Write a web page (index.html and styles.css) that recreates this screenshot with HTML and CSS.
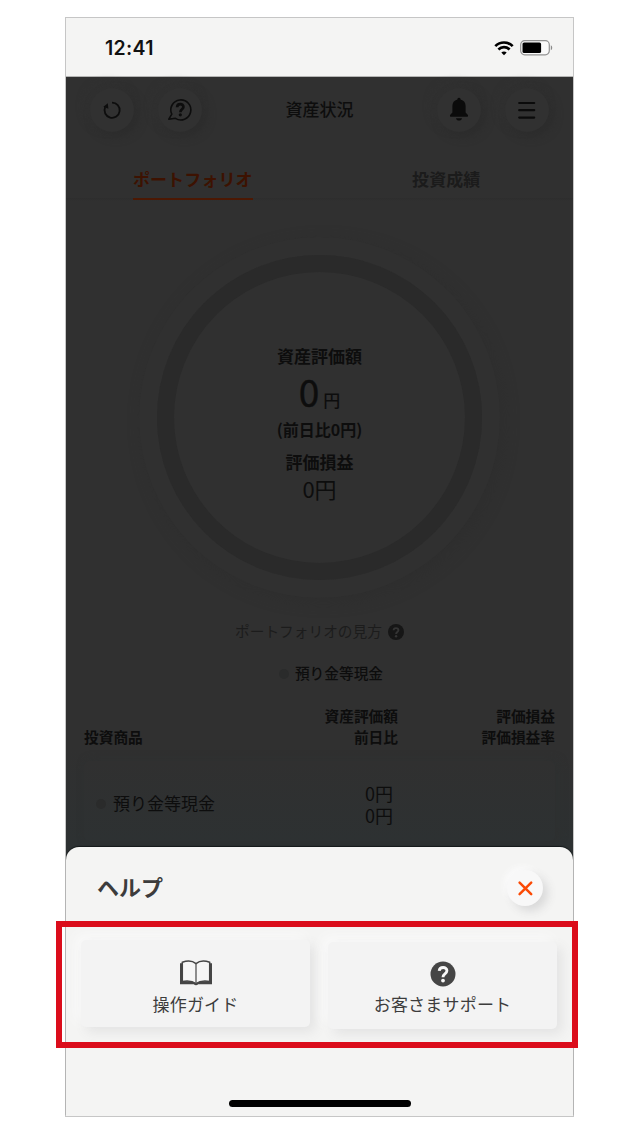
FILE: index.html
```html
<!DOCTYPE html>
<html lang="ja">
<head>
<meta charset="utf-8">
<title>資産状況</title>
<link rel="stylesheet" href="styles.css">
</head>
<body>
<div class="phone">
  <div class="status">
    <span class="time">12:41</span>
    <svg class="wifi" width="20" height="16" viewBox="0 0 20 16"><g fill="none" stroke="#000" stroke-width="2.7"><path d="M1.3 6.1C6.2 1.3 13.8 1.3 18.7 6.1"/><path d="M4.4 9.4c3.2-3 8-3 11.2 0"/></g><path d="M10 15.2l-2.7-2.7c1.5-1.3 3.9-1.3 5.4 0z"/></svg>
    <svg class="battery" width="33" height="16" viewBox="0 0 33 16"><rect x=".7" y=".7" width="28.6" height="14.1" rx="4" fill="#fafafa" stroke="#929292" stroke-width="1.2"/><rect x="2.5" y="2.5" width="18.6" height="10.6" rx="1.6"/><path d="M30.8 5.3c1.9.8 1.9 4.2 0 5z" fill="#8a8a8a"/></svg>
  </div>
  <main class="screen">
    <header class="bar">
      <button class="round"><svg width="44" height="44" viewBox="0 0 44 44"><path d="M22 14.6a7.6 7.6 0 1 1-6.9 4.6" fill="none" stroke="#0d0d0d" stroke-width="1.8"/><path d="M13.4 18.8l4.400-3.600.6 5.600z" fill="#0d0d0d"/></svg></button>
      <button class="round"><svg width="44" height="44" viewBox="0 0 44 44"><path d="M13.800 26.200A10 10 0 1 1 17.400 30.300L10.800 31.200z" fill="none" stroke="#0d0d0d" stroke-width="1.600" stroke-linejoin="round"/><path d="M19.100 19.200c.2-4 6.400-3.900 6.300-.2-.1 2.500-3 2.200-3 5.200" fill="none" stroke="#0d0d0d" stroke-width="2.700"/><circle cx="22.300" cy="26.800" r="1.600" fill="#0d0d0d"/></svg></button>
      <h1 class="title">資産状況</h1>
      <button class="round"><svg width="44" height="44" viewBox="0 0 44 44"><path d="M22 9.800c1 0 1.600.7 1.600 1.700 3.300.8 5 3.300 5 6.600v6.300l2.100 2.300c.8 1 .2 2.100-.9 2.100H14.200c-1.100 0-1.700-1.100-.9-2.100l2.100-2.300v-6.300c0-3.300 1.700-5.800 5-6.600 0-1 .6-1.700 1.600-1.700zM19 30.200h6c-.3 3.200-5.700 3.200-6 0z" fill="#0b0b0b"/></svg></button>
      <button class="round"><svg width="44" height="44" viewBox="0 0 44 44"><path d="M14.200 15h15M14.200 22.200h15M14.200 29.600h15" stroke="#0b0b0b" stroke-width="2.200" stroke-linecap="round"/></svg></button>
    </header>
    <nav class="tabs">
      <div class="tab"><span class="tab-label active">ポートフォリオ</span></div>
      <div class="tab"><span class="tab-label">投資成績</span></div>
    </nav>
    <section class="donut">
      <div class="l17">資産評価額</div>
      <div class="amount"><span class="num">0</span><span class="yen">円</span></div>
      <div class="diff">(前日比0円)</div>
      <div class="l17 gain">評価損益</div>
      <div class="gain-num">0円</div>
    </section>
    <div class="howto"><span>ポートフォリオの見方</span><svg width="16" height="16" viewBox="0 0 16 16"><circle cx="8" cy="8" r="8" fill="#161616"/><path d="M5.600 6.300c.1-3 4.800-2.900 4.800-.1 0 1.800-2.300 1.800-2.300 3.800" fill="none" stroke="#343434" stroke-width="1.900"/><circle cx="8.100" cy="12.200" r="1.200" fill="#343434"/></svg></div>
    <div class="legend"><i class="dot"></i><span>預り金等現金</span></div>
    <div class="thead"><span>投資商品</span><span class="col">資産評価額<br>前日比</span><span class="col">評価損益<br>評価損益率</span></div>
    <div class="row"><i class="dot"></i><span class="name">預り金等現金</span><div class="vals"><div>0円</div><div>0円</div></div></div>
  </main>
  <section class="sheet">
    <div class="sheet-head">
      <h2>ヘルプ</h2>
      <button class="close"><svg width="36" height="36" viewBox="0 0 36 36"><path d="M12.600 12.600l11.600 11.600M24.200 12.600L12.600 24.200" stroke="#fb4a05" stroke-width="2.500" stroke-linecap="round"/></svg></button>
    </div>
    <div class="choices">
      <button class="card"><svg width="34" height="26" viewBox="0 0 34 26"><path d="M1 3.200h3v18.600c5-.9 9-.6 12.500 1.400h1c3.500-2 7.500-2.300 12.500-1.400V3.200h3v21H19.200c-1.200 1.300-3.200 1.300-4.400 0H1z" fill="#454545"/><path d="M3.300 2.200C8.500.3 13.500.6 17 3.600c3.500-3 8.500-3.300 13.700-1.400v19.300c-5-.8-10-.6-13.700 2-3.700-2.600-8.700-2.800-13.700-2z" fill="#f6f6f6" stroke="#454545" stroke-width="1.500"/><path d="M17 3.500v20" stroke="#555" stroke-width="1.300"/></svg><span>操作ガイド</span></button>
      <button class="card second"><svg width="26" height="26" viewBox="0 0 26 26"><circle cx="13" cy="13" r="12.500" fill="#454545"/><path d="M9.200 9.900c.3-4.600 7.800-4.500 7.700-.1-.1 3.200-3.900 3.100-3.900 6.400" fill="none" stroke="#f8f8f8" stroke-width="2.900"/><circle cx="13" cy="19.600" r="1.900" fill="#f8f8f8"/></svg><span>お客さまサポート</span></button>
    </div>
    <div class="home"></div>
  </section>
  <div class="highlight"></div>
</div>
</body>
</html>
```
FILE: styles.css
```css
* { box-sizing: border-box; }
body { margin: 0; padding: 17px 0 0 65px; background: #fff; font-family: "Noto Sans CJK JP", sans-serif; }
button { border: 0; padding: 0; margin: 0; font: inherit; color: inherit; background: none; }
h1, h2 { margin: 0; }
svg { display: block; flex: none; }
i { flex: none; }
.phone { position: relative; width: 509px; height: 1100px; border: 1px solid #c6c6c6; background: linear-gradient(#303030 0 730px, #2d3132 828px); display: flex; flex-direction: column; }
.status { height: 59px; flex: none; background: #f4f4f3; border-bottom: 1px solid #b5b5b4; display: flex; align-items: center; padding: 2px 20px 0 39px; }
.time { flex: 1; font: 600 19.5px/24px Inter, sans-serif; letter-spacing: .3px; color: #111; }
.wifi { margin-right: 6px; }
.screen { height: 770px; flex: none; color: #0d0d0d; }
.bar { height: 66px; display: flex; align-items: center; gap: 24px; padding: 0 24px; }
.round { width: 44px; height: 44px; border-radius: 50%; background: #313131; box-shadow: 4px 4px 10px #2c2c2c, -4px -4px 10px #313131; }
.title { flex: 1; text-align: center; font-size: 17px; font-weight: 500; line-height: 24px; padding-bottom: 2px; }
.tabs { height: 58px; display: flex; background: linear-gradient(transparent 55px, #2d2d2d 55px, #303030); }
.tab { flex: 1; display: flex; justify-content: center; }
.tab-label { height: 57px; padding-top: 24px; font-size: 17px; line-height: 24px; font-weight: 700; letter-spacing: .1px; color: #1b1b1b; white-space: nowrap; }
.active { color: #3d1201; border-bottom: 2px solid #4c1803; }
.donut { width: 325px; height: 325px; margin: 54px 0 0 91px; border: 17.5px solid #2a2a2a; border-radius: 50%; box-shadow: 0 0 0 18px #303030, 4px 4px 14px 18px #2e2e2e; display: flex; flex-direction: column; align-items: center; padding-top: 72px; }
.l17 { font-size: 17px; font-weight: 700; line-height: 24px; }
.amount { height: 46px; display: flex; align-items: baseline; line-height: 46px; gap: 4px; }
.num { font-size: 37px; font-weight: 400; -webkit-text-stroke: .4px #0d0d0d; }
.yen { font-size: 17px; font-weight: 500; }
.diff { font-size: 16px; font-weight: 700; line-height: 24px; margin-top: 3px; }
.gain { margin-top: 9px; }
.gain-num { font-size: 22px; line-height: 30px; margin-top: -1px; }
.howto { display: flex; justify-content: center; align-items: center; gap: 6px; margin-top: 41px; height: 22px; font-size: 14.7px; color: #1c1c1c; }
.howto span { padding-bottom: 3px; }
.legend { display: flex; justify-content: center; align-items: center; gap: 6px; height: 22px; margin-top: 20px; padding-left: 23px; font-size: 14.7px; font-weight: 500; }
.legend span { padding-bottom: 3px; }
.dot { width: 10px; height: 10px; border-radius: 50%; background: #2a2b2b; }
.thead { display: grid; grid-template-columns: 1fr 1fr 1fr; align-items: end; padding: 0 18px; margin-top: 20px; font-size: 14.7px; font-weight: 700; line-height: 21px; }
.col { text-align: right; }
.row { display: flex; align-items: center; height: 80px; margin: 14px 18px 0; padding: 6px 162px 0 12px; border-radius: 6px; background: linear-gradient(#303030, #2d3132); box-shadow: 3px 0 10px #2e3030; font-size: 17px; }
.name { flex: 1; margin-left: 7px; padding-bottom: 3px; }
.vals { font-size: 18px; line-height: 22px; text-align: right; }
.sheet { flex: 1; background: #f4f4f3; border-radius: 13px 13px 0 0; box-shadow: 0 -1px 1px #15191a; display: flex; flex-direction: column; align-items: center; color: #3c3c3c; }
.sheet-head { width: 507px; height: 82px; display: flex; justify-content: space-between; align-items: center; padding: 0 30px 0 31px; }
.sheet-head h2 { font-size: 22px; font-weight: 700; line-height: 32px; padding-bottom: 4px; }
.close { width: 36px; height: 36px; border-radius: 50%; background: #f8f8f8; box-shadow: 5px 5px 10px #d9d9d9, -3px -3px 6px #fbfbfb; }
.choices { display: flex; gap: 18px; margin-top: 11px; padding-right: 1px; }
.card { width: 229px; height: 87px; border-radius: 5px; background: #f3f3f3; box-shadow: 5px 5px 12px #e3e3e3, -5px -5px 12px #fafafa; display: flex; flex-direction: column; align-items: center; padding-top: 20px; font-size: 17px; font-weight: 400; line-height: 24px; letter-spacing: .2px; }
.card span { margin-top: 6px; }
.second { margin-top: 2px; padding-top: 19px; }
.second span { margin-top: 5px; }
.home { width: 182px; height: 7px; border-radius: 4px; background: #000; margin-top: 71px; }
.highlight { position: absolute; left: -10px; top: 903px; width: 522px; height: 127px; border: 6px solid #db0d1b; }
```
